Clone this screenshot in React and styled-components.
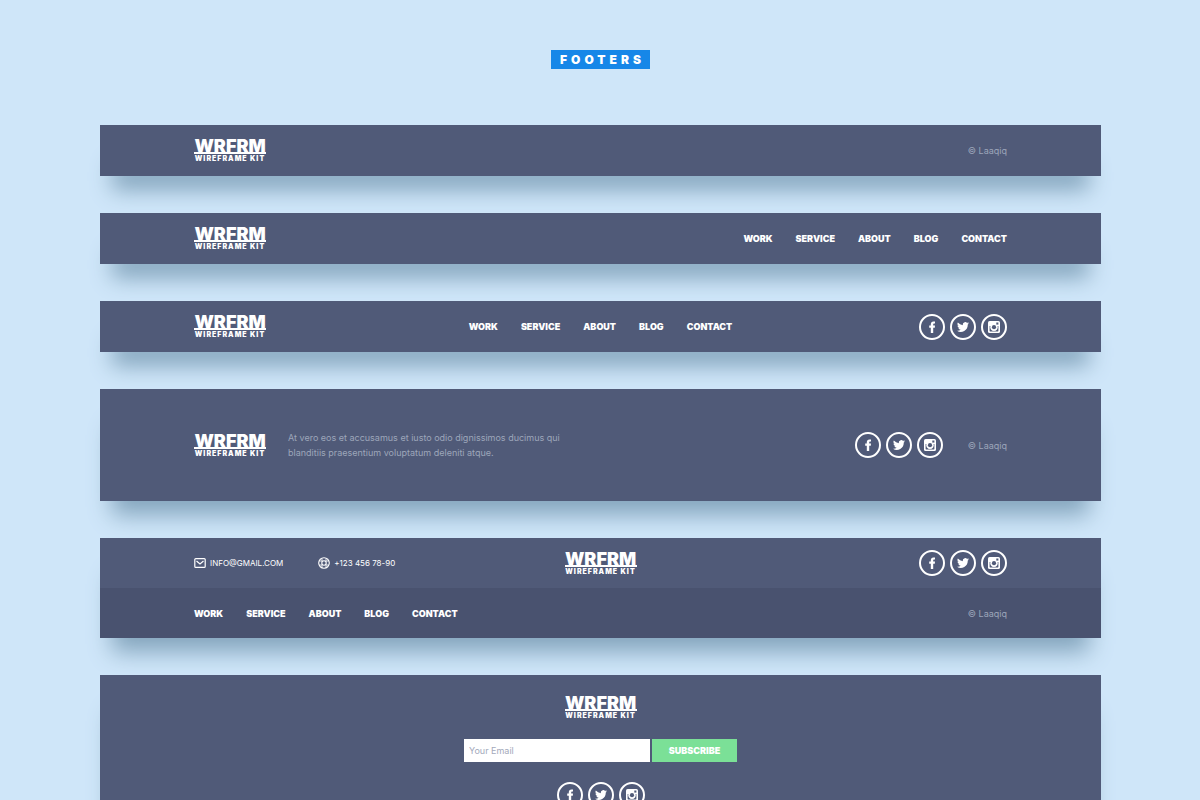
import React from 'react'
import styled, { createGlobalStyle } from 'styled-components'

const GlobalStyle = createGlobalStyle`
  * {
    box-sizing: border-box;
  }
  body {
    margin: 0;
    background: #cfe6f9;
    color: #fff;
    font-family: Inter, "Liberation Sans", sans-serif;
    font-size: 9px;
    line-height: 15px;
  }
`

const Page = styled.main`
  padding: 50px 99px 60px 100px;
`

const Title = styled.h1`
  width: fit-content;
  margin: 0 auto 56px;
  padding: 0 5px 0 9px;
  background: #1687e8;
  font-size: 12px;
  line-height: 19px;
  font-weight: 900;
  letter-spacing: 4px;
`

const FooterList = styled.div`
  display: flex;
  flex-direction: column;
  gap: 37px;
`

const Footer = styled.footer`
  background: #505a78;
  box-shadow: 0 26px 22px -12px #84a5bd;
`

const Row = styled.div`
  display: grid;
  grid-template-columns: ${({ $columns }) => $columns || '1fr auto'};
  align-items: center;
  min-height: ${({ $height }) => $height || 51}px;
  padding: 0 94px;
  background: ${({ $dark }) => ($dark ? '#49526f' : 'transparent')};
`

const LogoBox = styled.a`
  display: flex;
  flex-direction: column;
  align-items: center;
  gap: 1px;
  width: 72px;
  color: #fff;
  text-decoration: none;
`

const LogoName = styled.strong`
  display: flex;
  justify-content: center;
  width: 100%;
  border-bottom: 2px solid #fff;
  font-size: 18px;
  line-height: 13px;
  font-weight: 900;
`

const LogoTag = styled.small`
  font-size: 7px;
  line-height: 7px;
  font-weight: 900;
  letter-spacing: 1px;
  white-space: nowrap;
`

const NavList = styled.nav`
  display: flex;
  gap: 23px;
`

const NavLink = styled.a`
  color: #fff;
  font-weight: 900;
  text-decoration: none;
`

const SocialList = styled.div`
  display: flex;
  gap: 5px;
`

const SocialLink = styled.a`
  display: flex;
  align-items: center;
  justify-content: center;
  width: 26px;
  height: 26px;
  border: 2px solid #fff;
  border-radius: 50%;
  color: #fff;
`

const Side = styled.div`
  display: flex;
  align-items: center;
  justify-content: flex-end;
  gap: 25px;
`

const Copyright = styled.span`
  color: #9da6ba;
`

const About = styled.p`
  max-width: 300px;
  margin: 0 0 0 22px;
  color: #9da6ba;
`

const Contacts = styled.div`
  display: flex;
  gap: 35px;
`

const ContactLink = styled.a`
  display: flex;
  align-items: center;
  gap: 4px;
  color: #fff;
  font-size: 8px;
  text-decoration: none;
`

const Stack = styled.div`
  display: flex;
  flex-direction: column;
  align-items: center;
  gap: 20px;
  padding: 21px 94px;
`

const Form = styled.form`
  display: flex;
  gap: 2px;
`

const EmailInput = styled.input`
  width: 186px;
  height: 23px;
  padding: 0 5px;
  border: 0;
  border-radius: 0;
  background: #fff;
  color: #505a78;
  font: inherit;

  &::placeholder {
    color: #a3a9bb;
    opacity: 1;
  }
`

const SubmitButton = styled.button`
  width: 85px;
  height: 23px;
  padding: 0;
  border: 0;
  background: #7be097;
  color: #fff;
  font: inherit;
  font-weight: 900;
`

const links = ['WORK', 'SERVICE', 'ABOUT', 'BLOG', 'CONTACT']

function Logo() {
  return (
    <LogoBox href="#home">
      <LogoName>WRFRM</LogoName>
      <LogoTag>WIREFRAME KIT</LogoTag>
    </LogoBox>
  )
}

function Nav() {
  return (
    <NavList>
      {links.map((link) => (
        <NavLink key={link} href={`#${link.toLowerCase()}`}>{link}</NavLink>
      ))}
    </NavList>
  )
}

function Social() {
  return (
    <SocialList>
      <SocialLink href="#facebook" aria-label="Facebook">
        <svg width="12" height="12" viewBox="0 0 12 12" fill="currentColor">
          <path d="M4.8 12V6.8H3.2V4.6h1.6V3.3C4.8 1.4 5.8.4 7.4.4H9v2.2H8c-.6 0-.8.3-.8.8v1.2H9l-.2 2.2H7.2V12z" />
        </svg>
      </SocialLink>
      <SocialLink href="#twitter" aria-label="Twitter">
        <svg width="12" height="12" viewBox="0 0 24 24" fill="currentColor">
          <path d="M24 4.6a10 10 0 0 1-2.8.8 5 5 0 0 0 2.1-2.7 10 10 0 0 1-3.1 1.2 4.9 4.9 0 0 0-8.4 4.5A14 14 0 0 1 1.7 3.2a4.9 4.9 0 0 0 1.5 6.5 5 5 0 0 1-2.2-.6 4.9 4.9 0 0 0 3.9 4.9 5 5 0 0 1-2.2.1 4.9 4.9 0 0 0 4.6 3.4A9.9 9.9 0 0 1 0 19.5a14 14 0 0 0 21.5-12.4A10 10 0 0 0 24 4.6z" />
        </svg>
      </SocialLink>
      <SocialLink href="#instagram" aria-label="Instagram">
        <svg width="12" height="12" viewBox="0 0 12 12">
          <rect width="12" height="12" rx="1.6" fill="#fff" />
          <path d="M1.6 5v4.8c0 .4.2.6.6.6h7.6c.4 0 .6-.2.6-.6V5H9.6a3.8 3.8 0 1 1-7.2 0z" fill="#505a78" />
          <circle cx="6" cy="6.2" r="2.1" fill="#505a78" />
          <rect x="8.3" y="1.5" width="2.1" height="2.1" fill="#505a78" />
        </svg>
      </SocialLink>
    </SocialList>
  )
}

function MailIcon() {
  return (
    <svg width="12" height="12" viewBox="0 0 12 12" fill="none" stroke="currentColor" strokeWidth="1.2">
      <rect x=".8" y="1.6" width="10.4" height="8.8" rx="1" />
      <path d="M2.5 4 6 7l3.5-3" />
    </svg>
  )
}

function SupportIcon() {
  return (
    <svg width="12" height="12" viewBox="0 0 12 12" fill="none" stroke="currentColor" strokeWidth="1.1">
      <circle cx="6" cy="6" r="5.3" />
      <circle cx="6" cy="6" r="2.2" />
      <path d="M4 1.2v3.2M8 1.2v3.2M4 7.6v3.2M8 7.6v3.2M1.2 4h3M7.8 4h3M1.2 8h3M7.8 8h3" strokeWidth=".8" />
    </svg>
  )
}

export default function App() {
  return (
    <Page>
      <GlobalStyle />
      <Title>FOOTERS</Title>
      <FooterList>
        <Footer>
          <Row>
            <Logo />
            <Copyright>© Laaqiq</Copyright>
          </Row>
        </Footer>

        <Footer>
          <Row>
            <Logo />
            <Nav />
          </Row>
        </Footer>

        <Footer>
          <Row $columns="1fr auto 1fr">
            <Logo />
            <Nav />
            <Side>
              <Social />
            </Side>
          </Row>
        </Footer>

        <Footer>
          <Row $columns="auto 1fr auto" $height={112}>
            <Logo />
            <About>
              At vero eos et accusamus et iusto odio dignissimos ducimus qui blanditiis praesentium
              voluptatum deleniti atque.
            </About>
            <Side>
              <Social />
              <Copyright>© Laaqiq</Copyright>
            </Side>
          </Row>
        </Footer>

        <Footer>
          <Row $columns="1fr auto 1fr" $height={50}>
            <Contacts>
              <ContactLink href="mailto:info@gmail.com">
                <MailIcon />
                INFO@GMAIL.COM
              </ContactLink>
              <ContactLink href="tel:+1234567890">
                <SupportIcon />
                +123 456 78-90
              </ContactLink>
            </Contacts>
            <Logo />
            <Side>
              <Social />
            </Side>
          </Row>
          <Row $height={50} $dark>
            <Nav />
            <Copyright>© Laaqiq</Copyright>
          </Row>
        </Footer>

        <Footer>
          <Stack>
            <Logo />
            <Form onSubmit={(e) => e.preventDefault()}>
              <EmailInput type="email" placeholder="Your Email" aria-label="Your Email" />
              <SubmitButton type="submit">SUBSCRIBE</SubmitButton>
            </Form>
            <Social />
          </Stack>
        </Footer>
      </FooterList>
    </Page>
  )
}
